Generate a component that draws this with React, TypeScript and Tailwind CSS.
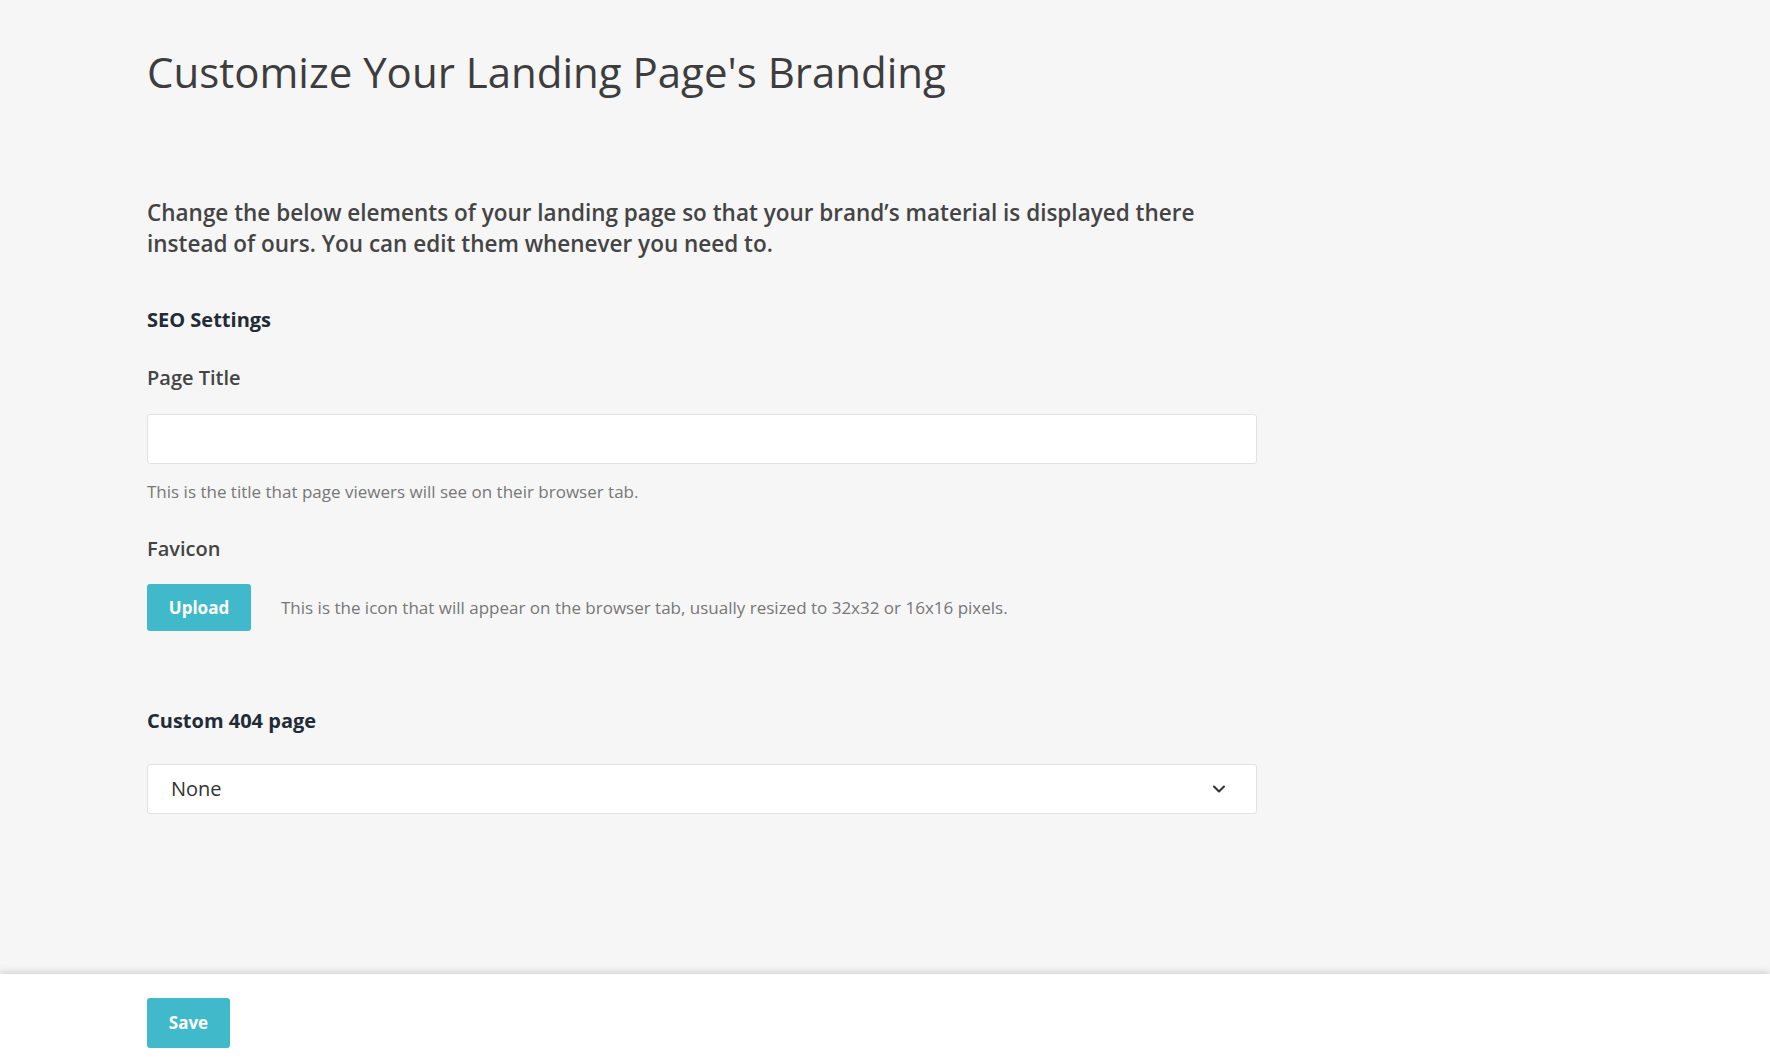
import { ChevronDown } from 'lucide-react';

const font = { fontFamily: '"Open Sans", "Noto Sans", sans-serif' };

const BrandingSettings = () => {
  return (
    <div className="min-h-screen flex flex-col bg-[#f6f6f6] text-[#444]" style={font}>
      <main className="flex-1 px-[147px] pt-[48px]">
        <h1 className="text-[42px] leading-[48px] font-normal text-[#3d3d3d]">
          Customize Your Landing Page's Branding
        </h1>

        <p className="mt-[101px] w-[1075px] text-[22.5px] leading-[31px] font-semibold text-[#444]">
          Change the below elements of your landing page so that your brand’s material is displayed there instead of ours. You can edit them whenever you need to.
        </p>

        {/* SEO section */}
        <h2 className="mt-[47px] text-[20px] leading-[28px] font-bold text-[#222b36]">SEO Settings</h2>

        <label className="block mt-[30px] text-[20px] leading-[28px] font-semibold text-[#444]">Page Title</label>
        <input
          type="text"
          className="block mt-[22px] w-[1110px] h-[50px] bg-white border border-[#e2e2e2] rounded-[3px] px-4 text-[18px] outline-none"
        />
        <p className="mt-[16px] text-[17px] leading-[24px] text-[#777]">
          This is the title that page viewers will see on their browser tab.
        </p>

        <label className="block mt-[31px] text-[20px] leading-[28px] font-semibold text-[#444]">Favicon</label>
        <div className="mt-[21px] flex items-center gap-[30px]">
          <button className="w-[104px] h-[47px] rounded-[3px] bg-[#40bacb] text-white text-[17px] font-bold">
            Upload
          </button>
          <span className="text-[17px] text-[#777]">
            This is the icon that will appear on the browser tab, usually resized to 32x32 or 16x16 pixels.
          </span>
        </div>

        {/* 404 section */}
        <h2 className="mt-[76px] text-[20px] leading-[28px] font-bold text-[#222b36]">Custom 404 page</h2>
        <div className="mt-[29px] w-[1110px] h-[50px] bg-white border border-[#e2e2e2] rounded-[3px] flex items-center justify-between pl-[23px] pr-[27px]">
          <span className="text-[20px] text-[#333]">None</span>
          <ChevronDown className="w-[20px] h-[20px] text-[#333]" strokeWidth={2.5} />
        </div>
      </main>

      <footer className="h-[84px] shrink-0 bg-white shadow-[0_-3px_6px_rgba(0,0,0,0.12)] px-[147px] pt-[24px]">
        <button className="w-[83px] h-[50px] rounded-[3px] bg-[#40bacb] text-white text-[17px] font-bold">
          Save
        </button>
      </footer>
    </div>
  );
};

export default function App() {
  return <BrandingSettings />;
}
